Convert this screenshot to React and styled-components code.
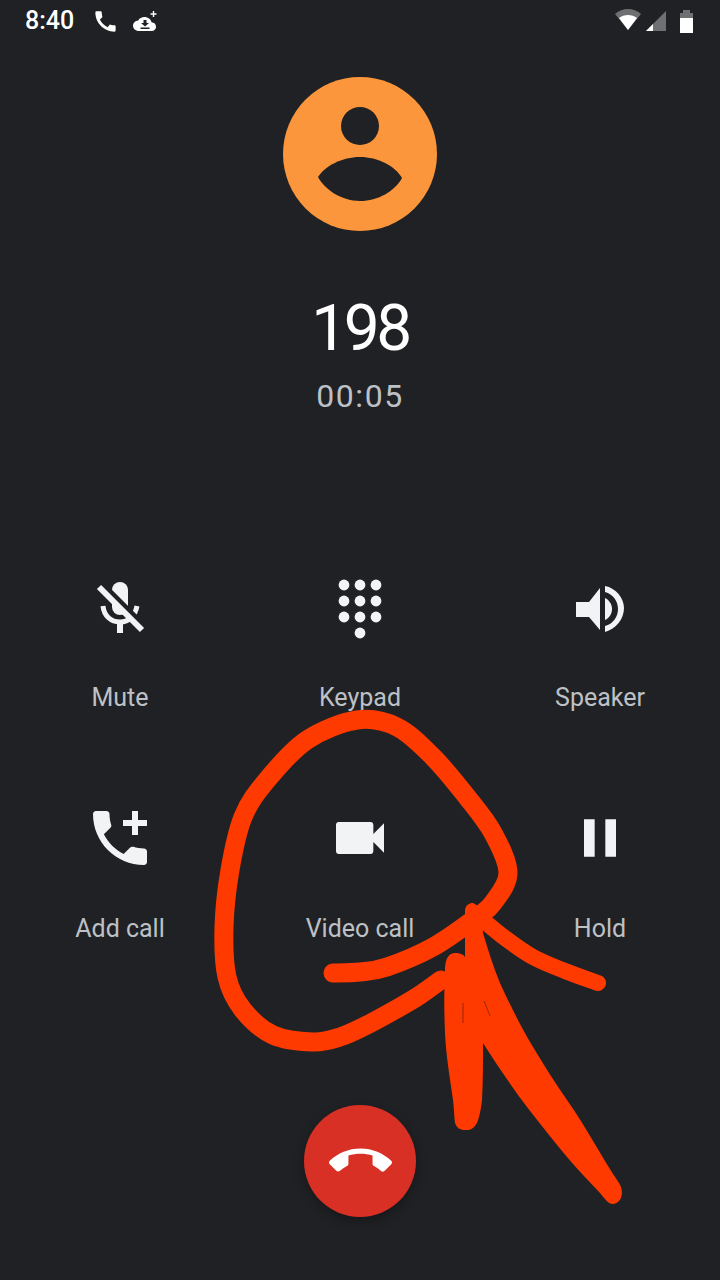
import React from "react";
import styled, { createGlobalStyle } from "styled-components";

const GlobalStyle = createGlobalStyle`
  html, body {
    margin: 0;
    padding: 0;
    background: #202124;
  }
`;

const callPath =
  "M20.01 15.38c-1.23 0-2.42-.2-3.53-.56-.35-.12-.74-.03-1.01.24l-1.57 1.97c-2.83-1.35-5.48-3.9-6.89-6.83l1.95-1.66c.27-.28.35-.67.24-1.02-.37-1.11-.56-2.3-.56-3.53 0-.54-.45-.99-.99-.99H4.19C3.65 3 3 3.24 3 3.99 3 13.28 10.73 21 20.01 21c.71 0 .99-.63.99-1.18v-3.45c0-.54-.45-.99-.99-.99z";

// hand drawn circle around the video call button
const loopPoints = [
  [441, 980], [420, 995], [400, 1007], [367, 1025], [340, 1037], [313, 1042],
  [273, 1035], [243, 1010], [227, 977], [224, 927], [230, 870], [243, 817],
  [267, 780], [307, 740], [357, 720], [397, 727], [433, 757], [467, 797],
  [493, 833], [508, 873], [493, 903], [477, 917], [433, 947], [387, 967],
  [360, 972], [333, 973],
];

const smoothLine = (points) => {
  let d = `M${points[0][0]} ${points[0][1]}`;
  for (let i = 0; i < points.length - 1; i++) {
    const p0 = points[i - 1] || points[i];
    const p1 = points[i];
    const p2 = points[i + 1];
    const p3 = points[i + 2] || p2;
    const c1x = p1[0] + (p2[0] - p0[0]) / 6;
    const c1y = p1[1] + (p2[1] - p0[1]) / 6;
    const c2x = p2[0] - (p3[0] - p1[0]) / 6;
    const c2y = p2[1] - (p3[1] - p1[1]) / 6;
    d += `C${c1x} ${c1y} ${c2x} ${c2y} ${p2[0]} ${p2[1]}`;
  }
  return d;
};

const MutedMic = () => (
  <svg width="60" height="60" viewBox="0 0 60 60">
    <rect x="22" y="5" width="16" height="33" rx="8" fill="#f1f3f4" />
    <path d="M13 29c1 10 8 16 17 16s15-6 17-16" fill="none" stroke="#f1f3f4" strokeWidth="5" />
    <rect x="27" y="44" width="6" height="12" fill="#f1f3f4" />
    <line x1="12" y1="7" x2="55" y2="50" stroke="#202124" strokeWidth="6" />
    <line x1="9" y1="10" x2="52" y2="53" stroke="#f1f3f4" strokeWidth="6" />
  </svg>
);

const KeypadDots = () => (
  <svg width="60" height="60" viewBox="0 0 60 60" fill="#f1f3f4">
    {[14, 30, 46].map((x) =>
      [8, 24, 40].map((y) => <circle key={`${x}-${y}`} cx={x} cy={y} r="5.4" />)
    )}
    <circle cx="30" cy="56" r="5.4" />
  </svg>
);

const SpeakerIcon = () => (
  <svg width="60" height="60" viewBox="0 0 60 60" fill="#f1f3f4">
    <path d="M6 25v15h13l11 13V11L19 25z" />
    <path d="M35 21c4 2 7 6 7 11s-3 9-7 11z" />
    <path d="M35 9c11 2 19 12 19 22 0 11-8 21-19 24v-6c8-2 13-9 13-17s-5-15-13-17z" />
  </svg>
);

const AddCallIcon = () => (
  <svg width="72" height="72" viewBox="0 0 24 24" fill="#f1f3f4">
    <path d="M20 15.5c-1.25 0-2.45-.2-3.57-.57-.35-.11-.74-.03-1.02.24l-2.2 2.2c-2.83-1.44-5.15-3.75-6.59-6.59l2.2-2.21c.28-.26.36-.65.25-1-.37-1.12-.57-2.32-.57-3.57 0-.55-.45-1-1-1H4c-.55 0-1 .45-1 1 0 9.39 7.61 17 17 17 .55 0 1-.45 1-1v-3.5c0-.55-.45-1-1-1zM21 6h-3V3h-2v3h-3v2h3v3h2V8h3z" />
  </svg>
);

const VideoIcon = () => (
  <svg width="64" height="64" viewBox="0 0 24 24" fill="#f1f3f4">
    <path d="M17 10.5V7c0-.55-.45-1-1-1H4c-.55 0-1 .45-1 1v10c0 .55.45 1 1 1h12c.55 0 1-.45 1-1v-3.5l4 4v-11l-4 4z" />
  </svg>
);

const PauseIcon = () => (
  <svg width="64" height="64" viewBox="0 0 24 24" fill="#f1f3f4">
    <path d="M6 19h4V5H6v14zm8-14v14h4V5h-4z" />
  </svg>
);

const actions = [
  { label: "Mute", Icon: MutedMic },
  { label: "Keypad", Icon: KeypadDots },
  { label: "Speaker", Icon: SpeakerIcon },
  { label: "Add call", Icon: AddCallIcon },
  { label: "Video call", Icon: VideoIcon },
  { label: "Hold", Icon: PauseIcon },
];

const App = () => {
  return (
    <Page>
      <GlobalStyle />
      <StatusBar>
        <StatusLeft>
          <Clock>8:40</Clock>
          <svg width="27" height="27" viewBox="0 0 24 24" fill="#fff">
            <path d={callPath} />
          </svg>
          <svg width="26" height="24" viewBox="0 0 26 24">
            <path
              fill="#fff"
              transform="translate(0 8) scale(.96 .875) translate(0 -4)"
              d="M19.35 10.04C18.67 6.59 15.64 4 12 4 9.11 4 6.6 5.64 5.35 8.04 2.34 8.36 0 10.91 0 14c0 3.31 2.69 6 6 6h13c2.76 0 5-2.24 5-5 0-2.64-2.05-4.78-4.65-4.96z"
            />
            <path fill="#202124" d="M10.5 11h3v3h2.500L12 17.500 8 14h2.500zM7.500 18.500h9V20h-9z" />
            <path fill="#fff" d="M17.500 4.300h2.300V2h1.400v2.300h2.300v1.400h-2.300V8h-1.400V5.700h-2.300z" />
          </svg>
        </StatusLeft>
        <StatusRight>
          <svg width="28" height="24" viewBox="0 0 28 24">
            <path fill="#6f7072" d="M1 5C4 2 9 0 14 0s10 2 13 5L14 21z" />
            <path fill="#fff" d="M5 9c2.500-2 5.700-3 9-3s6.500 1 9 3l-9 12z" />
          </svg>
          <svg width="20" height="20" viewBox="0 0 20 20">
            <path fill="#6f7072" d="M20 0v20H0z" />
            <path fill="#fff" d="M7 13v7H0z" />
          </svg>
          <BatteryIcon width="13" height="23" viewBox="0 0 13 23">
            <path fill="#6f7072" d="M3 0h7v3h3v6H0V3h3z" />
            <path fill="#fff" d="M0 8h13v15H0z" />
          </BatteryIcon>
        </StatusRight>
      </StatusBar>

      <Avatar>
        <svg width="154" height="154" viewBox="0 0 154 154" fill="#202124">
          <circle cx="77" cy="49" r="19" />
          <path d="M35 100C42 89 59 80 77 80C95 80 112 89 119 101C112 114 95 124 77 124C59 124 42 113 35 100Z" />
        </svg>
      </Avatar>
      <Name>198</Name>
      <Timer>00:05</Timer>

      <Actions>
        {actions.map(({ label, Icon }) => (
          <Action key={label}>
            <IconSlot>
              <Icon />
            </IconSlot>
            <Label>{label}</Label>
          </Action>
        ))}
      </Actions>

      <EndCall aria-label="End call">
        <svg width="63" height="63" viewBox="0 0 24 24" fill="#fff">
          <path d="M12 9c-1.600 0-3.150.25-4.600.72v3.100c0 .39-.23.74-.56.9-.98.49-1.870 1.120-2.660 1.850-.18.18-.43.28-.7.28-.28 0-.53-.11-.71-.29L.29 13.080c-.18-.17-.29-.42-.29-.7 0-.28.11-.53.29-.71C3.340 8.780 7.460 7 12 7s8.660 1.780 11.710 4.670c.18.18.29.43.29.71 0 .28-.11.53-.29.71l-2.480 2.480c-.18.18-.43.29-.71.29-.27 0-.52-.11-.7-.28-.79-.74-1.690-1.360-2.670-1.850-.33-.16-.56-.5-.56-.9v-3.100C15.150 9.250 13.600 9 12 9z" />
        </svg>
      </EndCall>

      <Scribble viewBox="0 0 720 1280">
        <g fill="none" stroke="#ff3a00" strokeLinecap="round" strokeLinejoin="round">
          <path strokeWidth="19" d={smoothLine(loopPoints)} />
          <path strokeWidth="16" d={smoothLine([[477, 915], [505, 938], [533, 957], [565, 971], [598, 983]])} />
        </g>
        <path
          fill="#ff3a00"
          d="M473 903C480 905 482 915 483 933C488 950 493 966 500 983C510 1005 521 1027 533 1047C544 1065 555 1083 567 1100C585 1125 602 1158 619 1183C624 1190 623 1203 613 1204C608 1204 605 1199 600 1193C589 1181 578 1170 567 1157C553 1140 540 1124 527 1107C512 1087 497 1065 483 1043C483 1062 483 1082 482 1100C481 1110 479 1118 477 1123C473 1130 469 1130 465 1130C460 1130 457 1128 455 1123C454 1115 454 1108 453 1100C450 1078 446 1056 445 1033C444 1010 444 988 445 967C446 958 449 953 455 953C460 953 463 954 465 957L465 910C466 905 469 903 473 903Z"
        />
        <g stroke="#7a2410" strokeWidth="0.8">
          <line x1="463" y1="1003" x2="463" y2="1023" />
          <line x1="484" y1="1001" x2="490" y2="1016" />
        </g>
      </Scribble>
    </Page>
  );
};

export default App;

const Page = styled.div`
  position: relative;
  display: flex;
  flex-direction: column;
  align-items: center;
  width: 720px;
  height: 1280px;
  overflow: hidden;
  background: #202124;
  font-family: Roboto, "Liberation Sans", sans-serif;
`;

const StatusBar = styled.div`
  display: flex;
  justify-content: space-between;
  align-items: center;
  align-self: stretch;
  height: 42px;
  padding: 0 27px 0 25px;
`;

const StatusLeft = styled.div`
  display: flex;
  align-items: center;
  gap: 14px;
`;

const StatusRight = styled.div`
  display: flex;
  align-items: center;
  gap: 4px;
`;

const BatteryIcon = styled.svg`
  margin-left: 10px;
`;

const Clock = styled.span`
  margin-right: 4px;
  color: #fff;
  font-size: 25px;
  font-weight: 500;
  line-height: 42px;
`;

const Avatar = styled.div`
  width: 154px;
  height: 154px;
  margin-top: 35px;
  border-radius: 50%;
  background: #fc963c;
  svg {
    display: block;
  }
`;

const Name = styled.div`
  margin-top: 62px;
  color: #fff;
  font-size: 64px;
  font-weight: 400;
  line-height: 72px;
  letter-spacing: -3.5px;
`;

const Timer = styled.div`
  margin-top: 11px;
  color: #bdc1c6;
  font-size: 32px;
  line-height: 40px;
  letter-spacing: 1.6px;
`;

const Actions = styled.div`
  display: grid;
  grid-template-columns: repeat(3, 240px);
  row-gap: 95px;
  margin-top: 161px;
`;

const Action = styled.div`
  display: flex;
  flex-direction: column;
  align-items: center;
`;

const IconSlot = styled.div`
  display: flex;
  justify-content: center;
  align-items: center;
  height: 60px;
  svg {
    flex-shrink: 0;
    overflow: visible;
  }
`;

const Label = styled.div`
  margin-top: 45px;
  margin-bottom: -1px;
  color: #bdc1c6;
  font-size: 25px;
  line-height: 32px;
`;

const EndCall = styled.button`
  display: flex;
  justify-content: center;
  align-items: center;
  width: 112px;
  height: 112px;
  margin-top: 161px;
  padding: 0;
  border: none;
  border-radius: 50%;
  background: #d93025;
  box-shadow: 0 4px 12px rgba(0, 0, 0, 0.3);
`;

const Scribble = styled.svg`
  position: absolute;
  top: 0;
  left: 0;
  width: 720px;
  height: 1280px;
  pointer-events: none;
`;
